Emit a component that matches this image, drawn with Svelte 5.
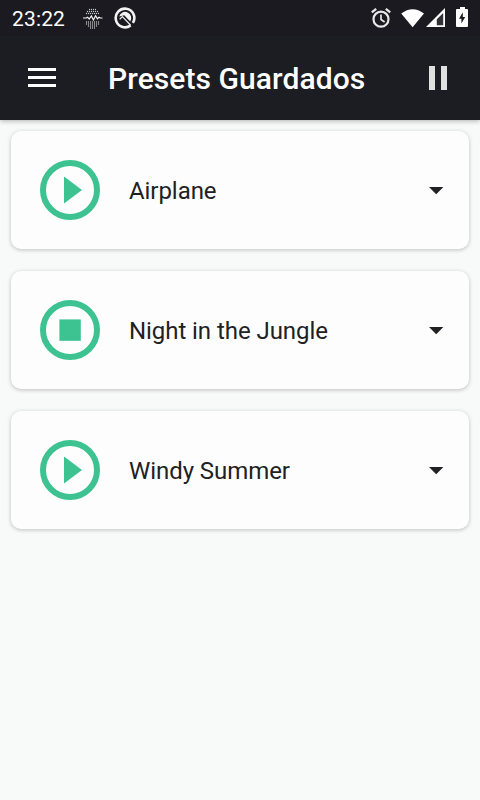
<script>
  const presets = [
    { name: 'Airplane', playing: false },
    { name: 'Night in the Jungle', playing: true },
    { name: 'Windy Summer', playing: false }
  ];
  const dotRows = [
    { y: 2.5, half: 2 },
    { y: 4.5, half: 3 },
    { y: 6.5, half: 3.5 },
    { y: 15, half: 3.5 },
    { y: 17, half: 3.5 },
    { y: 19, half: 2.5 },
    { y: 21, half: 1.5 }
  ];
  const dots = dotRows.flatMap(({ y, half }) =>
    Array.from({ length: half * 2 }, (_, i) => ({ x: 9.5 + (i - half + 0.5) * 2, y }))
  );
</script>

<div class="screen">
  <div class="status">
    <span class="clock">23:22</span>
    <svg class="wave" width="20" height="22" viewBox="0 0 20 22">
      {#each dots as d}
        <circle cx={d.x} cy={d.y} r=".64" fill="#c8c8ca" />
      {/each}
      <path d="M0 11h3.2l1.4-.8 1.6 1.8 2.2-3 2 4 2.2-4.2 1.8 3 1.6-1.5 1.2.7H19.5" fill="none" stroke="#f4f4f4" stroke-width="1.2" />
    </svg>
    <svg class="q" width="22" height="22" viewBox="0 0 22 22">
      <path d="M18.9 15.9A9.3 9.3 0 1 0 16.6 18.4" fill="none" stroke="#f2f2f2" stroke-width="2.6" />
      <path d="M5.2 9.6A6.1 6.1 0 1 1 16.2 14.4L10.2 8.3Z" fill="#f4f4f4" />
      <path d="M5.7 12.2L8.4 9.6L16.6 18.2" fill="none" stroke="#e8e8ea" stroke-width="1.3" />
    </svg>
    <div class="system">
      <svg class="alarm" width="22" height="22" viewBox="0 0 22 22" fill="none" stroke="#e8e8e9">
        <circle cx="11" cy="12.2" r="7.5" stroke-width="2.2" />
        <path d="M11 7.5v5l3.6 2.5" stroke-width="1.7" />
        <path d="M1.8 5.4L6.2 1.8M15.8 1.8l4.4 3.6" stroke-width="2.3" />
      </svg>
      <svg class="wifi" width="24" height="19" viewBox="0 0 24 19"><path d="M.2 4.5Q11.7-4 23 4.5L11.6 18.2Z" fill="#fff" /></svg>
      <svg class="signal" width="20" height="20" viewBox="0 0 20 20">
        <path d="M0 19L19 0V19Z" fill="#fff" />
        <path d="M10.8 11.2L17.2 5V17.3H10.8Z" fill="#303036" />
      </svg>
      <svg class="battery" width="12" height="20" viewBox="0 0 12 20">
        <path d="M4 0h5v2h2q1 0 1 1v16q0 1-1 1H1q-1 0-1-1V3q0-1 1-1h3z" fill="#fff" />
        <path d="M6.8 5.3L3 11.7H5.4V16.5L9.2 10H6.8Z" fill="#1a1a20" />
      </svg>
    </div>
  </div>

  <header>
    <button class="menu" aria-label="Menu"><span></span><span></span><span></span></button>
    <h1>Presets Guardados</h1>
    <button class="pause" aria-label="Pause"><span></span><span></span></button>
  </header>

  <main>
    {#each presets as preset}
      <article>
        <svg class="action" width="60" height="60" viewBox="0 0 60 60">
          <circle cx="30" cy="30" r="27" fill="none" stroke="#3dc391" stroke-width="6" />
          {#if preset.playing}
            <path d="M19.4 19.4h21.4v21.4H19.4z" fill="#3dc391" />
          {:else}
            <path d="M24 16.5L42 30L24 43.5Z" fill="#3dc391" />
          {/if}
        </svg>
        <span class="name">{preset.name}</span>
        <svg class="caret" width="15" height="8" viewBox="0 0 15 8"><path d="M0 0h14.4L7.2 7.3z" fill="#212123" /></svg>
      </article>
    {/each}
  </main>
</div>

<style>
  .screen {
    height: 800px;
    width: 480px;
    overflow: hidden;
    display: flex;
    flex-direction: column;
    background: #f8faf9;
    font-family: Roboto, "Liberation Sans", sans-serif;
  }
  .status {
    height: 36px;
    flex: none;
    box-sizing: border-box;
    display: flex;
    align-items: flex-start;
    padding: 0 12px;
    background: #1a1a20;
    color: #fff;
    position: relative;
    z-index: 2;
  }
  svg { display: block; flex: none; }
  .clock { width: 71px; font-size: 21px; line-height: 38px; letter-spacing: .15px; }
  .wave { margin-top: 7px; }
  .q { margin: 7px 0 0 11px; }
  .system { display: flex; margin-left: auto; }
  .alarm { margin-top: 7px; }
  .wifi { margin: 9px 0 0 9px; }
  .signal { margin: 8px 0 0 1px; }
  .battery { margin: 7px 0 0 10px; }
  header {
    height: 84px;
    flex: none;
    box-sizing: border-box;
    display: flex;
    align-items: center;
    padding: 0 33px 0 28px;
    background: #1c1d22;
    box-shadow: 0 1px 5px rgba(0, 0, 0, .3);
    position: relative;
    z-index: 1;
  }
  button { padding: 0; border: 0; background: none; display: flex; }
  .menu { width: 28px; flex-direction: column; gap: 5px; margin-bottom: 1px; }
  .menu span { height: 3px; background: #fff; }
  h1 {
    flex: 1;
    margin: 1px 0 0 52px;
    color: #fff;
    font-size: 30px;
    font-weight: 500;
    line-height: 40px;
    letter-spacing: .08px;
    white-space: nowrap;
  }
  .pause { gap: 6px; }
  .pause span { width: 6px; height: 24px; background: #e0e0e1; }
  main { padding: 11px; display: flex; flex-direction: column; gap: 22px; }
  article {
    height: 118px;
    box-sizing: border-box;
    display: flex;
    align-items: center;
    padding: 0 25px 0 29px;
    border-radius: 10px;
    background: #fdfdfd;
    box-shadow: 0 1px 4px rgba(0, 0, 0, .24);
  }
  .name { flex: 1; margin: 2px 0 0 29px; color: #212123; font-size: 24px; line-height: 32px; letter-spacing: -.06px; }
  .caret { margin-top: 1px; }
</style>
